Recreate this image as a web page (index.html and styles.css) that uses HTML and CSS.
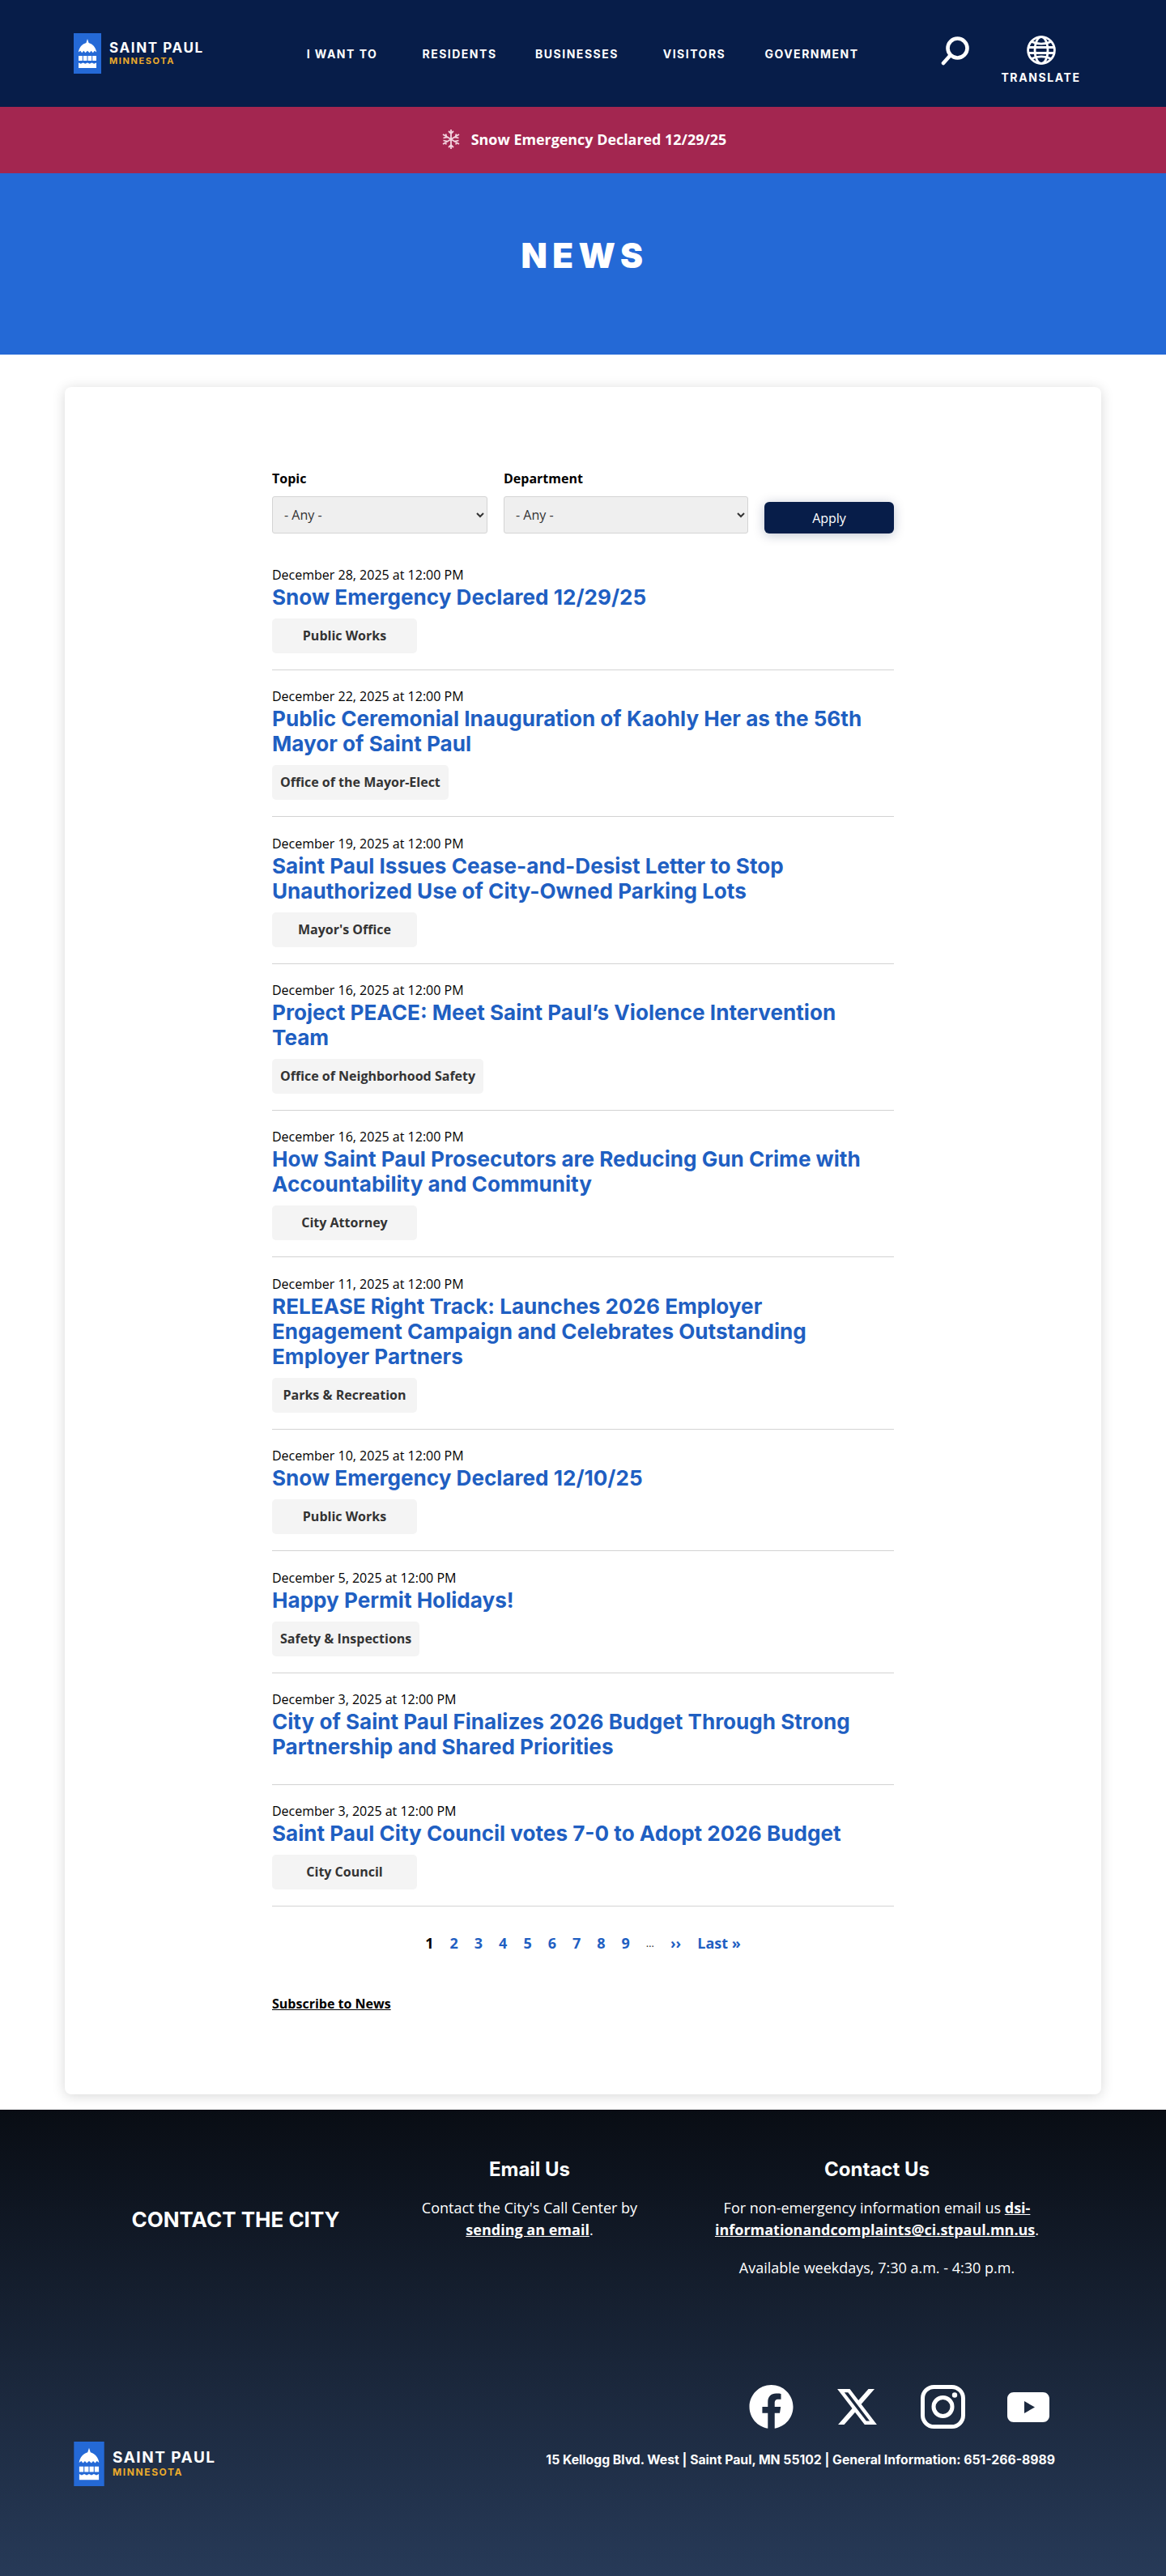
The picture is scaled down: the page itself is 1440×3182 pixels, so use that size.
FILE: index.html
```html
<!DOCTYPE html>
<html lang="en">
<head>
    <meta charset="UTF-8">
    <meta name="viewport" content="width=device-width, initial-scale=1.0">
    <title>News | Saint Paul, Minnesota</title>
    <link rel="stylesheet" href="styles.css">
</head>
<body>
    <header class="site-header">
        <a href="#" class="logo">
            <svg class="logo-mark" viewBox="0 0 34 50" aria-hidden="true">
                <rect width="34" height="50" fill="#2469d6"/>
                <path fill="#fff" d="M17 7l1.600 5c5 1.600 8.800 5.400 9.600 11.600l-2.400-1.800-2 2.400-2.200-2.400-2 2.400-2.600-2.400-2.600 2.400-2-2.400-2.200 2.400-2-2.400-2.400 1.800c.8-6.200 4.600-10 9.600-11.600z"/>
                <path fill="#fff" d="M6 28h4.800v6H6zM11.800 28h4.700v6h-4.700zM17.500 28h4.700v6h-4.700zM23.200 28H28v6h-4.800zM6 36.400l2.800 1.400 2.800-1.400 2.700 1.400 2.700-1.400 2.700 1.400 2.700-1.400 2.800 1.400 2.800-1.400V43H6z"/>
            </svg>
            <span class="logo-text">
                <span class="logo-name">SAINT PAUL</span>
                <span class="logo-state">MINNESOTA</span>
            </span>
        </a>
        <nav class="main-nav">
            <a href="#">I WANT TO</a>
            <a href="#">RESIDENTS</a>
            <a href="#">BUSINESSES</a>
            <a href="#">VISITORS</a>
            <a href="#">GOVERNMENT</a>
        </nav>
        <a href="#" class="search-link" aria-label="Search">
            <svg viewBox="0 0 35 36" fill="none" stroke="#fff" stroke-width="4.600" stroke-linecap="round">
                <circle cx="20.500" cy="14.500" r="12"/>
                <path d="M11.500 23.500L3 33"/>
            </svg>
        </a>
        <a href="#" class="translate-link">
            <svg viewBox="0 0 36 36" fill="none" stroke="#fff" stroke-width="2.800">
                <circle cx="18" cy="18" r="16.400"/>
                <ellipse cx="18" cy="18" rx="8" ry="16.400"/>
                <path d="M6 7.500c7 3.400 17 3.400 24 0M2 14.500h32M2 21.500h32M6 28.500c7-3.400 17-3.400 24 0"/>
            </svg>
            <span>TRANSLATE</span>
        </a>
    </header>

    <div class="alert-bar">
        <svg class="snowflake" viewBox="0 0 22 24" fill="none" stroke="#f3d5df" stroke-width="1.800">
            <path d="M11 0v24M1 6l20 12M21 6L1 18M8 2l3 3 3-3M8 22l3-3 3 3M1.500 10.500l4-1-1-4M20.500 10.500l-4-1 1-4M1.500 13.500l4 1-1 4M20.500 13.500l-4 1 1 4"/>
        </svg>
        <a href="#">Snow Emergency Declared 12/29/25</a>
    </div>

    <div class="page-banner">
        <h1>NEWS</h1>
    </div>

    <main class="news-card">
        <form class="filters">
            <div class="filter-group filter-topic">
                <label for="topic">Topic</label>
                <select id="topic"><option>- Any -</option></select>
            </div>
            <div class="filter-group filter-department">
                <label for="department">Department</label>
                <select id="department"><option>- Any -</option></select>
            </div>
            <button type="submit">Apply</button>
        </form>

        <article class="news-item">
            <div class="news-date">December 28, 2025 at 12:00 PM</div>
            <h2><a href="#">Snow Emergency Declared 12/29/25</a></h2>
            <div class="news-tags"><span class="tag">Public Works</span></div>
        </article>
        <article class="news-item">
            <div class="news-date">December 22, 2025 at 12:00 PM</div>
            <h2><a href="#">Public Ceremonial Inauguration of Kaohly Her as the 56th Mayor of Saint Paul</a></h2>
            <div class="news-tags"><span class="tag">Office of the Mayor-Elect</span></div>
        </article>
        <article class="news-item">
            <div class="news-date">December 19, 2025 at 12:00 PM</div>
            <h2><a href="#">Saint Paul Issues Cease-and-Desist Letter to Stop Unauthorized Use of City-Owned Parking Lots</a></h2>
            <div class="news-tags"><span class="tag">Mayor's Office</span></div>
        </article>
        <article class="news-item">
            <div class="news-date">December 16, 2025 at 12:00 PM</div>
            <h2><a href="#">Project PEACE: Meet Saint Paul’s Violence Intervention Team</a></h2>
            <div class="news-tags"><span class="tag">Office of Neighborhood Safety</span></div>
        </article>
        <article class="news-item">
            <div class="news-date">December 16, 2025 at 12:00 PM</div>
            <h2><a href="#">How Saint Paul Prosecutors are Reducing Gun Crime with Accountability and Community</a></h2>
            <div class="news-tags"><span class="tag">City Attorney</span></div>
        </article>
        <article class="news-item">
            <div class="news-date">December 11, 2025 at 12:00 PM</div>
            <h2><a href="#">RELEASE Right Track: Launches 2026 Employer Engagement Campaign and Celebrates Outstanding Employer Partners</a></h2>
            <div class="news-tags"><span class="tag">Parks &amp; Recreation</span></div>
        </article>
        <article class="news-item">
            <div class="news-date">December 10, 2025 at 12:00 PM</div>
            <h2><a href="#">Snow Emergency Declared 12/10/25</a></h2>
            <div class="news-tags"><span class="tag">Public Works</span></div>
        </article>
        <article class="news-item">
            <div class="news-date">December 5, 2025 at 12:00 PM</div>
            <h2><a href="#">Happy Permit Holidays!</a></h2>
            <div class="news-tags"><span class="tag">Safety &amp; Inspections</span></div>
        </article>
        <article class="news-item">
            <div class="news-date">December 3, 2025 at 12:00 PM</div>
            <h2><a href="#">City of Saint Paul Finalizes 2026 Budget Through Strong Partnership and Shared Priorities</a></h2>
            <div class="news-tags"></div>
        </article>
        <article class="news-item">
            <div class="news-date">December 3, 2025 at 12:00 PM</div>
            <h2><a href="#">Saint Paul City Council votes 7-0 to Adopt 2026 Budget</a></h2>
            <div class="news-tags"><span class="tag">City Council</span></div>
        </article>

        <nav class="pager">
            <span class="pager-current">1</span>
            <a href="#">2</a>
            <a href="#">3</a>
            <a href="#">4</a>
            <a href="#">5</a>
            <a href="#">6</a>
            <a href="#">7</a>
            <a href="#">8</a>
            <a href="#">9</a>
            <span class="pager-dots">…</span>
            <a href="#">››</a>
            <a href="#">Last »</a>
        </nav>

        <a href="#" class="subscribe-link">Subscribe to News</a>
    </main>

    <footer class="site-footer">
        <div class="footer-contact">
            <h2 class="contact-title">CONTACT THE CITY</h2>
            <div class="contact-col contact-email">
                <h3>Email Us</h3>
                <p>Contact the City's Call Center by <a href="#">sending an email</a>.</p>
            </div>
            <div class="contact-col contact-phone">
                <h3>Contact Us</h3>
                <p>For non-emergency information email us <a href="#">dsi-informationandcomplaints@ci.stpaul.mn.us</a>.</p>
                <p>Available weekdays, 7:30 a.m. - 4:30 p.m.</p>
            </div>
        </div>
        <div class="footer-bottom">
            <a href="#" class="logo logo-footer">
                <svg class="logo-mark" viewBox="0 0 34 50" aria-hidden="true">
                    <rect width="34" height="50" fill="#2469d6"/>
                    <path fill="#fff" d="M17 7l1.600 5c5 1.600 8.800 5.400 9.600 11.600l-2.400-1.800-2 2.400-2.200-2.400-2 2.400-2.600-2.400-2.600 2.400-2-2.400-2.200 2.400-2-2.400-2.400 1.800c.8-6.200 4.600-10 9.600-11.600z"/>
                    <path fill="#fff" d="M6 28h4.800v6H6zM11.800 28h4.700v6h-4.700zM17.500 28h4.700v6h-4.700zM23.200 28H28v6h-4.800zM6 36.400l2.800 1.400 2.800-1.400 2.700 1.400 2.700-1.400 2.700 1.400 2.700-1.400 2.800 1.400 2.800-1.400V43H6z"/>
                </svg>
                <span class="logo-text">
                    <span class="logo-name">SAINT PAUL</span>
                    <span class="logo-state">MINNESOTA</span>
                </span>
            </a>
            <div class="footer-right">
                <div class="social-links">
                    <a href="#" class="social-facebook" aria-label="Facebook">
                        <svg viewBox="8 8 496 496" fill="#fff"><path d="M504 256C504 119 393 8 256 8S8 119 8 256c0 123.780 90.690 226.380 209.250 245V327.690h-63V256h63v-54.640c0-62.150 37-96.480 93.670-96.480 27.140 0 55.520 4.840 55.520 4.840v61h-31.280c-30.800 0-40.410 19.120-40.410 38.730V256h68.780l-11 71.690h-57.780V501C413.310 482.380 504 379.780 504 256z"/></svg>
                    </a>
                    <a href="#" class="social-x" aria-label="X">
                        <svg viewBox="26 48 462 416" fill="#fff"><path d="M389.200 48h70.600L305.600 224.200 487 464H345L233.700 318.600 106.500 464H35.800L200.700 275.500 26.800 48H172.400L272.900 180.900 389.200 48zM364.400 421.800h39.100L151.100 88h-42L364.400 421.800z"/></svg>
                    </a>
                    <a href="#" class="social-instagram" aria-label="Instagram">
                        <svg viewBox="0 0 55 54" fill="none" stroke="#fff" stroke-width="5">
                            <rect x="2.500" y="2.500" width="50" height="49" rx="14"/>
                            <circle cx="27.500" cy="27" r="11.500"/>
                            <circle cx="42" cy="12.500" r="3.200" fill="#fff" stroke="none"/>
                        </svg>
                    </a>
                    <a href="#" class="social-youtube" aria-label="YouTube">
                        <svg viewBox="0 0 52 37" fill="#fff"><path fill-rule="evenodd" d="M8 0h36c4.500 0 8 3.500 8 8v21c0 4.500-3.500 8-8 8H8c-4.500 0-8-3.500-8-8V8c0-4.500 3.500-8 8-8zM21 11v15l13-7.500z"/></svg>
                    </a>
                </div>
                <div class="footer-address">15 Kellogg Blvd. West | Saint Paul, MN 55102 | General Information: 651-266-8989</div>
            </div>
        </div>
    </footer>
</body>
</html>
```

FILE: styles.css
```css
body {
    margin: 0;
    background-color: #fff;
    font-family: 'Open Sans', sans-serif;
    font-size: 16px;
    color: #000;
}
a {
    color: inherit;
    text-decoration: none;
}

/* header */
.site-header {
    display: flex;
    align-items: center;
    height: 132px;
    padding-left: 91px;
    background-color: #071d49;
    color: #fff;
}
.logo {
    display: flex;
    align-items: center;
    gap: 10px;
    width: 259px;
    flex-shrink: 0;
}
.logo-mark {
    display: block;
    width: 34px;
    height: 50px;
}
.logo-text {
    display: flex;
    flex-direction: column;
    font-family: 'Inter', sans-serif;
    font-weight: 700;
}
.logo-name {
    font-size: 17px;
    line-height: 18px;
    letter-spacing: 1.6px;
}
.logo-state {
    font-size: 11px;
    line-height: 14px;
    letter-spacing: 1.6px;
    color: #eaaa2c;
}
.main-nav {
    display: grid;
    grid-template-columns: repeat(5, 145px);
    justify-items: center;
    font-family: 'Inter', sans-serif;
    font-size: 14px;
    font-weight: 700;
    letter-spacing: 1.5px;
}
.search-link {
    width: 35px;
    height: 36px;
    margin-left: 87px;
    margin-bottom: 7px;
}
.search-link svg {
    display: block;
}
.translate-link {
    display: flex;
    flex-direction: column;
    align-items: center;
    gap: 7px;
    width: 97px;
    margin-left: 40px;
    margin-top: 16px;
    font-family: 'Inter', sans-serif;
    font-size: 14px;
    font-weight: 700;
    letter-spacing: 1.6px;
}
.translate-link svg {
    display: block;
    width: 36px;
    height: 36px;
}

/* alert and banner */
.alert-bar {
    display: flex;
    justify-content: center;
    align-items: center;
    gap: 14px;
    height: 82px;
    box-sizing: border-box;
    padding-left: 3px;
    padding-bottom: 2px;
    background-color: #a32650;
    color: #fff;
    font-size: 17.9px;
    font-weight: 700;
}
.snowflake {
    width: 22px;
    height: 24px;
}
.page-banner {
    display: flex;
    justify-content: center;
    align-items: center;
    height: 224px;
    padding-bottom: 22px;
    box-sizing: border-box;
    background-color: #2469d6;
    color: #fff;
}
.page-banner h1 {
    margin: 0 0 0 4px;
    font-family: 'Inter', sans-serif;
    font-size: 42px;
    font-weight: 900;
    letter-spacing: 6.5px;
}

/* news list */
.news-card {
    display: block;
    width: 1280px;
    box-sizing: border-box;
    margin: 40px auto 19px;
    padding: 103px 256px 100px;
    background-color: #fff;
    border-radius: 8px;
    box-shadow: 0 2px 16px rgba(0, 0, 0, 0.16);
}
.filters {
    display: flex;
    align-items: flex-end;
    gap: 20px;
    margin-bottom: 18.4px;
}
.filter-group label {
    display: block;
    margin-bottom: 11px;
    font-size: 16px;
    line-height: 21px;
    font-weight: 700;
}
.filter-group select {
    display: block;
    width: 100%;
    height: 46px;
    padding: 0 10px;
    border: 1px solid #d4d4d4;
    border-radius: 3px;
    background-color: #efefef;
    font-family: 'Open Sans', sans-serif;
    font-size: 16px;
    color: #333;
}
.filter-topic {
    width: 266px;
}
.filter-department {
    width: 302px;
}
.filters button {
    width: 160px;
    height: 39px;
    border: none;
    border-radius: 6px;
    background-color: #071d49;
    color: #fff;
    font-family: 'Open Sans', sans-serif;
    font-size: 16px;
    box-shadow: 0 2px 14px rgba(7, 29, 73, 0.25);
}
.news-item {
    padding-top: 20.4px;
    padding-bottom: 20px;
    border-bottom: 1px solid #d3d3d3;
}
.news-date {
    font-size: 16px;
    line-height: 24px;
}
.news-item h2 {
    margin: 0;
    font-family: 'Inter', sans-serif;
    font-size: 26.1px;
    line-height: 31px;
    font-weight: 700;
    color: #1f5fc2;
}
.news-tags {
    display: flex;
    margin-top: 11px;
}
.tag {
    min-width: 159px;
    padding: 0 10px;
    background-color: #f4f4f4;
    border-radius: 5px;
    text-align: center;
    font-size: 16px;
    line-height: 43px;
    font-weight: 700;
    color: #333;
}

/* pager */
.pager {
    display: flex;
    justify-content: center;
    align-items: center;
    gap: 20px;
    margin-top: 33px;
    font-size: 18px;
    line-height: 24px;
    font-weight: 700;
    color: #1f5fc2;
}
.pager-current {
    color: #000;
}
.pager-dots {
    color: #333;
    font-weight: 400;
    font-size: 13px;
}
.subscribe-link {
    display: inline-block;
    margin-top: 51px;
    font-size: 16px;
    line-height: 24px;
    font-weight: 700;
    text-decoration: underline;
}

/* footer */
.site-footer {
    height: 577px;
    box-sizing: border-box;
    padding: 58px 0 0 91px;
    background: linear-gradient(to bottom, #090d14, #273a58);
    color: #fff;
}
.footer-contact {
    display: grid;
    grid-template-columns: 400px 326px 532px;
    height: 282px;
    text-align: center;
}
.contact-title {
    margin: 62px 0 0;
    font-family: 'Inter', sans-serif;
    font-size: 26px;
    line-height: 32px;
    font-weight: 700;
}
.contact-col {
    padding: 0 20px;
}
.contact-col h3 {
    margin: 0 0 18px;
    font-family: 'Inter', sans-serif;
    font-size: 24px;
    line-height: 32px;
    font-weight: 700;
}
.contact-col p {
    margin: 0 0 20px;
    font-size: 18px;
    line-height: 27px;
}
.contact-col a {
    font-weight: 700;
    text-decoration: underline;
}
.footer-bottom {
    display: flex;
    align-items: flex-start;
}
.logo-footer {
    width: auto;
    margin-top: 70px;
}
.logo-footer .logo-mark {
    width: 38px;
    height: 55px;
}
.logo-footer .logo-name {
    font-size: 19px;
    line-height: 20px;
    letter-spacing: 1.5px;
}
.logo-footer .logo-state {
    font-size: 12px;
    line-height: 16px;
    letter-spacing: 1.6px;
}
.footer-right {
    display: flex;
    flex-direction: column;
    align-items: flex-end;
    margin-left: auto;
    margin-right: 137px;
}
.social-links {
    display: flex;
    align-items: center;
    gap: 54px;
    margin-right: 7px;
}
.social-links a {
    display: block;
}
.social-links svg {
    display: block;
}
.social-facebook svg {
    width: 55px;
    height: 54px;
}
.social-x svg {
    width: 49px;
    height: 46px;
}
.social-instagram svg {
    width: 55px;
    height: 54px;
}
.social-youtube {
    margin-left: -2px;
}
.social-youtube svg {
    width: 52px;
    height: 37px;
}
.footer-address {
    margin-top: 27px;
    font-family: 'Inter', sans-serif;
    font-size: 15.75px;
    line-height: 24px;
    font-weight: 700;
}
```
